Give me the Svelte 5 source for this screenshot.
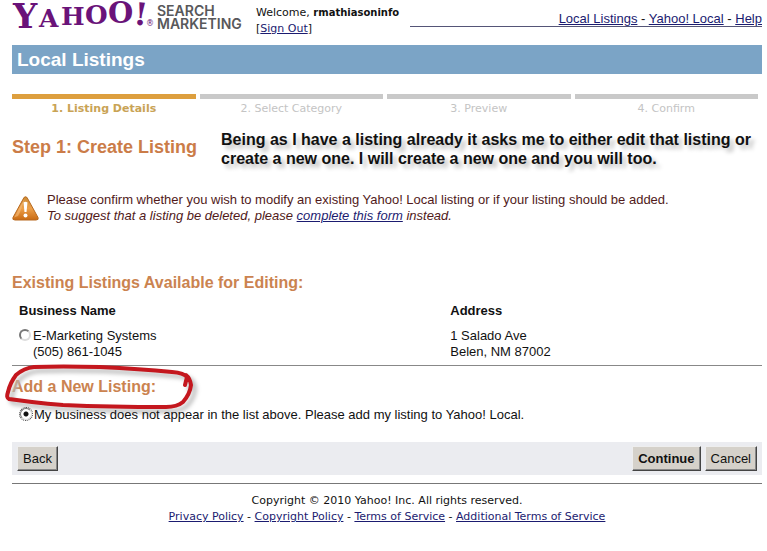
<script>
  const navLinks = ["Local Listings", "Yahoo! Local", "Help"];
  const steps = ["Listing Details", "Select Category", "Preview", "Confirm"];
  const currentStep = 0;

  const listings = [
    {
      id: "e-marketing",
      name: "E-Marketing Systems",
      phone: "(505) 861-1045",
      street: "1 Salado Ave",
      city: "Belen, NM 87002",
    },
  ];

  const footerLinks = [
    "Privacy Policy",
    "Copyright Policy",
    "Terms of Service",
    "Additional Terms of Service",
  ];

  let selected = "new";
</script>

<div class="page">
  <header>
    <div class="logo">
      <svg class="yahoo" width="142" height="32" viewBox="0 0 142 32" role="img" aria-label="Yahoo!">
        <text x="1" y="28" font-size="34">Y</text>
        <text x="27" y="27" font-size="25">A</text>
        <text x="49" y="25" font-size="25">H</text>
        <text x="73" y="24" font-size="26">O</text>
        <text x="96" y="23" font-size="29">O</text>
        <text x="122" y="25" font-size="31" transform="rotate(6 128 14)">!</text>
        <text class="reg" x="134" y="26" font-size="8">®</text>
      </svg>
      <div class="product">SEARCH<br />MARKETING</div>
    </div>
    <div class="welcome">
      Welcome, <b>rmathiasoninfo</b><br />[<a href="#signout">Sign Out</a>]
    </div>
    <nav>
      {#each navLinks as link, i}
        {#if i > 0}{" - "}{/if}<a href="#nav">{link}</a>
      {/each}
    </nav>
  </header>

  <h1>Local Listings</h1>

  <ol class="steps">
    {#each steps as step, i}
      <li class:active={i === currentStep}>{i + 1}. {step}</li>
    {/each}
  </ol>

  <div class="title">
    <h2>Step 1: Create Listing</h2>
    <p class="note">
      Being as I have a listing already it asks me to either edit that listing or<br />
      create a new one. I will create a new one and you will too.
    </p>
  </div>

  <div class="alert">
    <svg width="27" height="25" viewBox="0 0 27 25" aria-hidden="true">
      <defs>
        <linearGradient id="warn" x1="0" y1="0" x2="0" y2="1">
          <stop offset="0" stop-color="#c98a35" />
          <stop offset="0.5" stop-color="#eda04a" />
          <stop offset="1" stop-color="#c96a12" />
        </linearGradient>
      </defs>
      <path d="M12 1.5Q13.500 0 15 1.500L26 21.500Q27 24 24 24H3Q0 24 1 21.500Z" fill="url(#warn)" stroke="#b8691f" stroke-width="1" />
      <path d="M2 21.500L12.500 3Q9 15 6 20Z" fill="#f7bd7a" opacity="0.6" />
      <path d="M11.500 6.500Q13.500 5 15.500 6.500L14.500 16H12.500Z" fill="#fff" />
      <circle cx="13.500" cy="19.500" r="2" fill="#fff" />
    </svg>
    <p>
      Please confirm whether you wish to modify an existing Yahoo! Local listing or if your listing should be added.<br />
      <i>To suggest that a listing be deleted, please <a href="#form">complete this form</a> instead.</i>
    </p>
  </div>

  <h3>Existing Listings Available for Editing:</h3>

  <table>
    <thead>
      <tr><th>Business Name</th><th>Address</th></tr>
    </thead>
    <tbody>
      {#each listings as item}
        <tr>
          <td>
            <label class="choice">
              <input type="radio" name="listing" value={item.id} bind:group={selected} />
              <span>{item.name}<br />{item.phone}</span>
            </label>
          </td>
          <td>{item.street}<br />{item.city}</td>
        </tr>
      {/each}
    </tbody>
  </table>

  <div class="add">
    <h3>Add a New Listing:</h3>
    <svg class="circled" width="204" height="60" viewBox="0 0 204 60" aria-hidden="true">
      <path d="M185 23L187 15Q184 11 172 10Q140 7 100 5Q60 4 34 5Q24 6 16 13Q10 21 8 30Q6 36 9 37L32 40Q48 42 63 43Q110 45 166 45Q177 45 183 40Q190 32 191 23Q190 16 186 13" />
    </svg>
  </div>
  <label class="choice new">
    <input type="radio" name="listing" value="new" bind:group={selected} />
    <span>My business does not appear in the list above. Please add my listing to Yahoo! Local.</span>
  </label>

  <div class="actions">
    <button>Back</button>
    <div class="right">
      <button class="primary">Continue</button>
      <button>Cancel</button>
    </div>
  </div>

  <footer>
    Copyright © 2010 Yahoo! Inc. All rights reserved.<br />
    {#each footerLinks as link, i}
      {#if i > 0}{" - "}{/if}<a href="#legal">{link}</a>
    {/each}
  </footer>
</div>

<style>
  :global(body) {
    margin: 0;
    background: #fff;
  }

  .page {
    padding: 0 5px 0 12px;
    font: 13px/16px "Liberation Sans", Arial, sans-serif;
    color: #111;
  }

  a {
    color: #1b1b70;
  }

  h1,
  h2,
  h3,
  p {
    margin: 0;
  }

  header {
    display: flex;
    align-items: flex-start;
    height: 45px;
  }

  .logo {
    display: flex;
    flex: none;
    width: 244px;
  }

  .yahoo {
    overflow: visible;
    fill: #6a1379;
    font-family: "DejaVu Serif", serif;
    font-weight: bold;
  }

  .reg {
    font-family: "DejaVu Sans", sans-serif;
    font-weight: normal;
  }

  .product {
    padding-top: 4px;
    margin-left: 3px;
    font: 600 14px/13px Inter, sans-serif;
    color: #58585a;
  }

  .welcome {
    flex: none;
    width: 154px;
    padding-top: 5px;
    font: 11px/16px "DejaVu Sans", Verdana, sans-serif;
  }

  .welcome b {
    font-size: 10px;
  }

  nav {
    flex: 1;
    height: 15px;
    padding-top: 11px;
    border-bottom: 1px solid #555577;
    text-align: right;
  }

  h1 {
    padding: 0 5px;
    background: #7ba4c6;
    color: #fff;
    font-size: 19px;
    line-height: 29px;
  }

  .steps {
    display: grid;
    grid-template-columns: repeat(4, 1fr);
    gap: 4px;
    margin: 20px 4px 0 0;
    padding: 0;
    list-style: none;
  }

  .steps li {
    padding-top: 2px;
    border-top: 5px solid #c9c9c9;
    color: #c4c4c4;
    font: 11px/16px "DejaVu Sans", Verdana, sans-serif;
    text-align: center;
  }

  .steps .active {
    border-color: #dd9f3e;
    color: #c9a355;
    font-weight: bold;
  }

  .title {
    display: flex;
    align-items: flex-start;
    margin-top: 13px;
  }

  h2 {
    flex: none;
    width: 209px;
    color: #cb7c48;
    font-size: 18px;
    line-height: 34px;
  }

  .note {
    font-size: 16px;
    font-weight: bold;
    line-height: 19px;
    text-shadow: 4px 4px 4px #bbb;
  }

  .alert {
    display: flex;
    align-items: center;
    gap: 8px;
    margin-top: 24px;
    color: #511a1a;
  }

  .alert svg {
    flex: none;
  }

  h3 {
    color: #cb8350;
    font-size: 16px;
    line-height: 20px;
  }

  .alert + h3 {
    margin-top: 49px;
  }

  table {
    width: 100%;
    margin-top: 10px;
    padding-bottom: 5px;
    border-bottom: 1px solid #888;
    border-spacing: 0;
  }

  th,
  td {
    padding: 0 0 0 7px;
    text-align: left;
    vertical-align: top;
  }

  th {
    padding-bottom: 9px;
  }

  th:first-child {
    width: 57.5%;
  }

  .choice {
    display: flex;
    align-items: flex-start;
    gap: 2px;
  }

  input {
    appearance: none;
    flex: none;
    box-sizing: border-box;
    width: 12px;
    height: 12px;
    margin: 1px 0 0;
    border: 2px solid;
    border-color: #777 #ddd #ddd #777;
    border-radius: 50%;
    background: #fff;
  }

  input:checked {
    border-width: 1px;
    background: radial-gradient(circle, #111 2px, #fff 3px);
  }

  .new input {
    outline: 1px dotted #333;
  }

  .add {
    position: relative;
    padding-top: 11px;
  }

  .circled {
    position: absolute;
    top: -4px;
    left: -12px;
    fill: none;
    stroke: #c4171e;
    stroke-width: 4;
    stroke-linecap: round;
    stroke-linejoin: round;
    filter: drop-shadow(4px 4px 2px #bbb);
    pointer-events: none;
  }

  .new {
    position: relative;
    margin: 10px 8px 0;
  }

  .actions {
    display: flex;
    justify-content: space-between;
    align-items: center;
    margin-top: 19px;
    padding: 4px 5px;
    background: #ebecf0;
  }

  .right {
    display: flex;
    gap: 4px;
  }

  button {
    height: 25px;
    padding: 0 5px;
    border: 1px solid;
    border-color: #eee #444 #444 #eee;
    border-radius: 0;
    box-shadow: inset -1px -1px #888;
    background: #d5d1ca;
    color: #111;
    font: 13px/16px "Liberation Sans", Arial, sans-serif;
  }

  .primary {
    font-weight: bold;
  }

  footer {
    margin-top: 8px;
    padding-top: 9px;
    border-top: 1px solid #777;
    font: 11px/16px "DejaVu Sans", Verdana, sans-serif;
    text-align: center;
  }
</style>
